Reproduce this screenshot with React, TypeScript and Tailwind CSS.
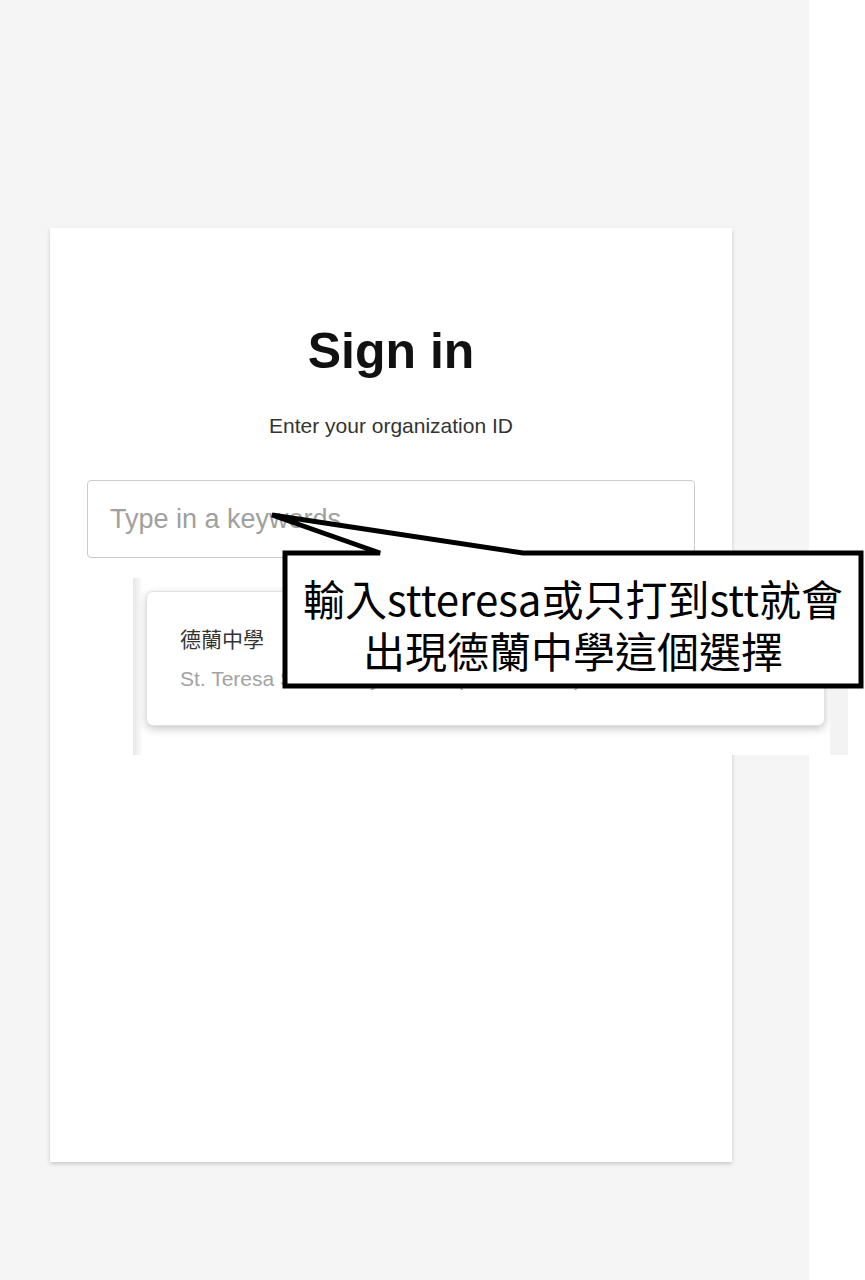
import React from "react";

const arial = { fontFamily: '"Liberation Sans", Arial, sans-serif' };

const Callout = () => (
  <>
    <svg
      className="absolute left-[262px] top-[505px]"
      width="603"
      height="190"
      viewBox="0 0 603 190"
    >
      <path
        d="M23 48 L118 48 L10 10 L261 48 L599 48 L599 181 L23 181 Z"
        fill="#ffffff"
        stroke="#000000"
        strokeWidth="5"
        strokeLinejoin="miter"
      />
    </svg>
    <div
      className="absolute left-[285px] top-[553px] w-[576px] h-[133px] flex flex-col items-center justify-center pt-[9px] text-[42px] leading-[52px] text-black"
      style={{ fontFamily: '"Noto Sans CJK TC", "Noto Sans", sans-serif' }}
    >
      <div>輸入stteresa或只打到stt就會</div>
      <div>出現德蘭中學這個選擇</div>
    </div>
  </>
);

const Suggestions = () => (
  <div className="absolute left-[133px] top-[578px] w-[715px] h-[177px] bg-white flex">
    <div className="w-[10px] bg-gradient-to-r from-[#e6e6e6] to-white" />
    <div className="flex-1 pt-[13px] pl-[3px] pr-[5px]">
      <div className="h-[135px] rounded-[7px] bg-white border border-[#e2e2e2] shadow-[0_3px_8px_rgba(0,0,0,0.22)] pl-[33px] pt-[32px]">
        <div
          className="text-[21px] leading-[28px] text-[#333]"
          style={{ fontFamily: '"Noto Sans CJK TC", "Liberation Sans", sans-serif' }}
        >
          德蘭中學
        </div>
        <div className="text-[21px] leading-[28px] mt-[13px] text-[#a3a3a3]" style={arial}>
          St. Teresa Secondary School (STTERESA)
        </div>
      </div>
    </div>
    <div className="w-[18px] bg-[#f3f3f3]" />
  </div>
);

export default function App() {
  return (
    <div className="relative flex h-[1280px] overflow-hidden bg-white" style={arial}>
      <div className="w-[809px] bg-[#f5f5f5] pt-[228px] pl-[50px]">
        <div className="w-[682px] h-[934px] bg-white shadow-[0_2px_4px_rgba(0,0,0,0.18)] pt-[93px] px-[37px]">
          <h1 className="text-center text-[50px] leading-[60px] font-bold text-[#111]">
            Sign in
          </h1>
          <p className="mt-[30px] text-center text-[21px] leading-[30px] text-[#333]">
            Enter your organization ID
          </p>
          <div className="mt-[39px] h-[78px] rounded-[4px] border border-[#cccccc] flex items-center pl-[22px]">
            <input
              className="w-full bg-transparent outline-none text-[27px] text-[#333] placeholder:text-[#a0a0a0]"
              placeholder="Type in a keywords"
              style={arial}
            />
          </div>
        </div>
      </div>
      <div className="flex-1 bg-white" />
      <Suggestions />
      <Callout />
    </div>
  );
}
